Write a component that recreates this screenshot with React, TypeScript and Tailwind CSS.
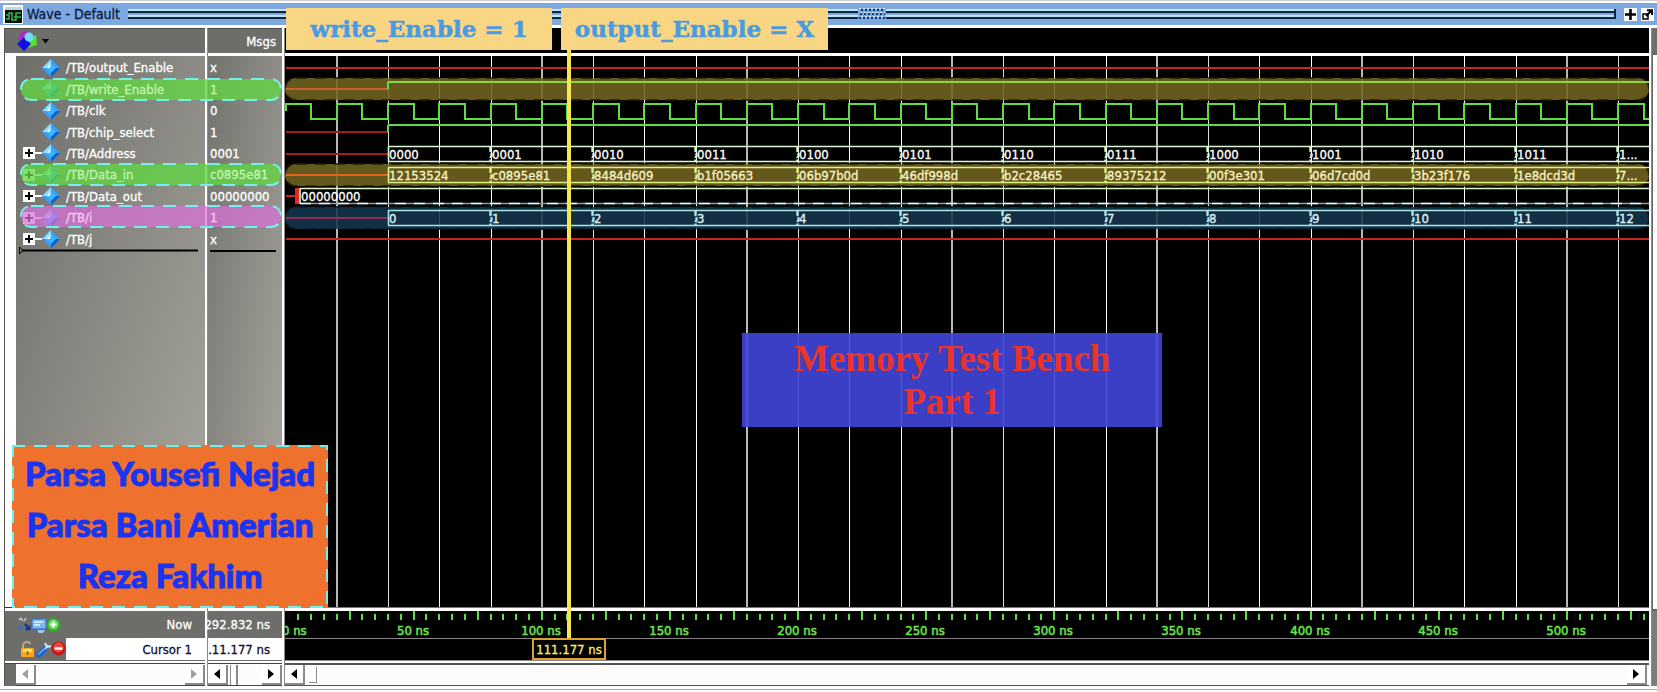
import React from "react";

const NS = 2.5625;
const ROW = 193 / 9;
const TOP = 1;

const GREEN = "relative z-10 text-[#c4f5ae]";
const PINK = "relative z-10 text-[#f8c8f4]";

const signals = [
  { name: "/TB/output_Enable", value: "x", bus: false, tint: "" },
  { name: "/TB/write_Enable", value: "1", bus: false, tint: GREEN },
  { name: "/TB/clk", value: "0", bus: false, tint: "" },
  { name: "/TB/chip_select", value: "1", bus: false, tint: "" },
  { name: "/TB/Address", value: "0001", bus: true, tint: "" },
  { name: "/TB/Data_in", value: "c0895e81", bus: true, tint: GREEN },
  { name: "/TB/Data_out", value: "00000000", bus: true, tint: "" },
  { name: "/TB/i", value: "1", bus: true, tint: PINK },
  { name: "/TB/j", value: "x", bus: true, tint: "" },
];

const addresses = ["0000", "0001", "0010", "0011", "0100", "0101", "0110", "0111", "1000", "1001", "1010", "1011", "1..."];
const dataIn = ["12153524", "c0895e81", "8484d609", "b1f05663", "06b97b0d", "46df998d", "b2c28465", "89375212", "00f3e301", "06d7cd0d", "3b23f176", "1e8dcd3d", "7..."];
const indexes = addresses.map((_, i) => String(i));

const rowY = (i: number) => Math.round(TOP + ROW * (i + 0.5));
const timeX = (ns: number) => Math.round(ns * NS + 0.5);
const range = (n: number) => Array.from({ length: n }, (_, i) => i);

function Diamond() {
  return (
    <svg width="18" height="18" viewBox="0 0 18 18" className="shrink-0">
      <path d="M9 0L18 9L9 18L0 9Z" fill="#1f86e8" />
      <path d="M9 0L0 9L5 9L9 5Z" fill="#8fdcff" />
      <path d="M9 0L18 9L13 9L9 5Z" fill="#3aa0f4" />
      <path d="M0 9L9 18L9 13L5 9Z" fill="#3f9af0" />
      <path d="M18 9L9 18L9 13L13 9Z" fill="#0b5fc8" />
      <path d="M9 4L14 9L9 14L4 9Z" fill="#38b6ff" />
      <path d="M9 4L4 9L8 9Z" fill="#e6fbff" />
    </svg>
  );
}

function Arrow({ dir, faint }: { dir: "left" | "right"; faint?: boolean }) {
  return (
    <button
      aria-label={dir === "left" ? "Scroll left" : "Scroll right"}
      className="flex h-5 w-5 shrink-0 items-center justify-center border-r-2 border-b-2 border-[#8a8a8a] bg-white"
    >
      <svg width="6" height="10" viewBox="0 0 6 10">
        <path d={dir === "left" ? "M6 0V10L0 5Z" : "M0 0V10L6 5Z"} fill={faint ? "#a0a0a0" : "#000"} />
      </svg>
    </button>
  );
}

function Bus({ row, values, color, text }: { row: number; values: string[]; color: string; text: string }) {
  const y = rowY(row);
  const start = timeX(40);
  return (
    <g>
      <g stroke={color} strokeWidth="1.6">
        <line x1={start} x2="100%" y1={y - 7.5} y2={y - 7.5} />
        <line x1={start} x2="100%" y1={y + 7.5} y2={y + 7.5} />
        <line x1={start + 0.5} x2={start + 0.5} y1={y - 7.5} y2={y + 7.5} />
        {values.slice(1).map((v, i) => {
          const x = timeX(80 + i * 40);
          return <path key={v} d={`M${x - 0.5} ${y - 7}v4l1 2v3l-1 2v4`} strokeWidth="2.4" strokeDasharray="5 1.5" fill="none" />;
        })}
      </g>
      {values.map((v, i) => (
        <text key={v} x={timeX(40 + i * 40) + 1} y={y + 5} fill={text} stroke={text} strokeWidth="0.3">{v}</text>
      ))}
    </g>
  );
}

function Band({ row, fill, edge }: { row: number; fill: string; edge: string }) {
  const y = rowY(row) - 11;
  return (
    <g>
      <rect x="0" y={y} width="100%" height="22" rx="11" fill={fill} />
      <rect x="0" y={y} width="100%" height="22" rx="11" fill="none" stroke={edge} strokeWidth="2" strokeDasharray="11 8" />
    </g>
  );
}

function Waves() {
  const clock = range(80).map((i) => `V${rowY(2) - 7}H${timeX(i * 20 + 10)}V${rowY(2) + 8}H${timeX(i * 20 + 20)}`).join("");
  const start = timeX(40);
  return (
    <svg width="100%" height="100%" className="absolute inset-0 text-[13px]">
      {range(80).map((i) => {
        const x = timeX((i + 1) * 20);
        return i % 4 === 0 ? (
          <line key={i} x1={x} x2={x} y1="0" y2="100%" stroke="#b8b8b6" strokeWidth="2" />
        ) : (
          <line key={i} x1={x + 0.5} x2={x + 0.5} y1="0" y2="100%" stroke={i % 4 === 1 ? "#dededc" : "#ffffff"} strokeWidth="1" />
        );
      })}
      <Band row={1} fill="rgba(114,100,32,0.88)" edge="rgba(34,28,4,0.75)" />
      <Band row={5} fill="rgba(114,100,32,0.88)" edge="rgba(34,28,4,0.75)" />
      <Band row={7} fill="rgba(20,54,78,0.88)" edge="rgba(8,26,38,0.85)" />
      <g strokeWidth="2" stroke="#c8271f">
        <line x1="1" x2="100%" y1={rowY(0)} y2={rowY(0)} />
        <line x1="1" x2={start} y1={rowY(1)} y2={rowY(1)} stroke="#c8622a" />
        <line x1="1" x2={start} y1={rowY(3)} y2={rowY(3)} stroke="#a81c18" />
        <line x1="1" x2={start} y1={rowY(4)} y2={rowY(4)} stroke="#a81c18" />
        <line x1="1" x2={start} y1={rowY(5)} y2={rowY(5)} stroke="#e0661f" />
        <line x1="1" x2="12" y1={rowY(6)} y2={rowY(6)} />
        <line x1="1" x2={start} y1={rowY(7)} y2={rowY(7)} stroke="#8a3150" />
        <line x1="1" x2="100%" y1={rowY(8)} y2={rowY(8)} />
      </g>
      <g fill="none" stroke="#5fdc46" strokeWidth="2">
        <line x1={start} x2={start} y1={rowY(1) - 7} y2={rowY(1)} />
        <line x1={start} x2="100%" y1={rowY(1) - 7} y2={rowY(1) - 7} stroke="#86d843" />
        <path d={`M1 ${rowY(2)}${clock}`} />
        <line x1={start} x2={start} y1={rowY(3) - 7} y2={rowY(3)} />
        <line x1={start} x2="100%" y1={rowY(3) - 7} y2={rowY(3) - 7} />
      </g>
      <Bus row={4} values={addresses} color="#d9f8d0" text="#ffffff" />
      <Bus row={5} values={dataIn} color="#dcf08a" text="#fbf3c4" />
      <rect x="10" y={rowY(6) - 8} width="5" height="16" fill="#e8281c" />
      <g stroke="#d9f8d0" strokeWidth="1.6">
        <line x1="15" x2="100%" y1={rowY(6) - 7.5} y2={rowY(6) - 7.5} />
        <line x1="15" x2="15" y1={rowY(6) - 7.5} y2={rowY(6) + 7.5} />
        <line x1="15" x2="100%" y1={rowY(6) + 7.5} y2={rowY(6) + 7.5} stroke="#8f9f9f" />
        <line x1="15" x2="100%" y1={rowY(6) + 7.5} y2={rowY(6) + 7.5} stroke="#d6fbff" strokeDasharray="11 8" />
      </g>
      <text x="16" y={rowY(6) + 5} fill="#fff" stroke="#fff" strokeWidth="0.3">00000000</text>
      <Bus row={7} values={indexes} color="#a9e6dc" text="#e2f3f8" />
    </svg>
  );
}

function Timeline() {
  return (
    <svg width="100%" height="27" className="block bg-black text-[13px]">
      {range(300).map((i) => (
        <line key={i} x1={timeX((i + 1) * 5)} x2={timeX((i + 1) * 5)} y1={(i + 1) % 5 === 0 ? 0 : 3} y2="9" stroke="#5fdc46" strokeWidth="2" />
      ))}
      <g fill="#6be34f" stroke="#6be34f" strokeWidth="0.5">
        <text x="-3" y="24">0 ns</text>
        {range(10).map((i) => (
          <text key={i} x={timeX((i + 1) * 50) - 1} y="24" textAnchor="middle">{`${(i + 1) * 50} ns`}</text>
        ))}
      </g>
    </svg>
  );
}

function HeaderIcon() {
  return (
    <svg width="22" height="22" viewBox="0 0 22 22">
      <path d="M6 2L12 0L8 8L1 10Z" fill="#b026c9" />
      <path d="M13 9L20 5L21 15L12 18Z" fill="#58e02e" />
      <path d="M8 7L15 14L8 21L1 14Z" fill="#1010e6" />
      <circle cx="13" cy="7" r="4.5" fill="#6fdcff" />
    </svg>
  );
}

function NowIcons() {
  return (
    <svg width="46" height="18" viewBox="0 0 46 18">
      <path d="M2 4l2-2 2 3M7 5l2-3" stroke="#d6dde6" strokeWidth="1.2" fill="none" />
      <circle cx="3.500" cy="12" r="2.300" fill="#3f6fa8" />
      <path d="M8 8l5 6M9 14l4-4" stroke="#0c3c86" strokeWidth="2.500" />
      <rect x="15" y="3" width="14" height="10" rx="1" fill="#7db8f2" stroke="#2c6fd0" />
      <path d="M17 6h9M17 9h6" stroke="#eaf5ff" strokeWidth="1.500" />
      <path d="M20 14h8l-2 3h-4z" fill="#9ccaf5" />
      <circle cx="36.500" cy="9" r="7" fill="#2fae2a" />
      <circle cx="36.500" cy="8.500" r="5" fill="#6fd75c" />
      <path d="M36.500 5.500v6M33.500 8.500h6" stroke="#fff" strokeWidth="2.200" />
    </svg>
  );
}

function CursorIcons() {
  return (
    <svg width="47" height="18" viewBox="0 0 47 18">
      <path d="M4 9V5.500a4 4 0 0 1 7.500-1.500" stroke="#b9a77c" strokeWidth="2" fill="none" />
      <rect x="2" y="8" width="13" height="9" rx="1" fill="#f6a623" />
      <rect x="4" y="9" width="9" height="3" fill="#ffe27a" />
      <path d="M8.500 11v4" stroke="#8b5a00" strokeWidth="1.500" />
      <path d="M20 15L26 9" stroke="#1c62d6" strokeWidth="5" strokeLinecap="round" />
      <path d="M20 14L25 9" stroke="#74b5ff" strokeWidth="1.500" strokeLinecap="round" />
      <path d="M26 9L29 5M26 3l2 4 4-1" stroke="#cfe2f5" strokeWidth="2" fill="none" />
      <circle cx="39.500" cy="8.500" r="7" fill="#c81414" />
      <circle cx="39.500" cy="7.500" r="5" fill="#e84a42" />
      <path d="M35.500 8.500h8" stroke="#fff" strokeWidth="2.400" />
    </svg>
  );
}

function Pill({ tone, place }: { tone: string; place: string }) {
  return (
    <svg height="23" className={`absolute left-[15px] w-[262px] ${place}`}>
      <rect x="1" y="1" width="260" height="21" rx="10" fill={tone} />
      <rect x="1" y="1" width="260" height="21" rx="10" fill="none" stroke="#74f0ea" strokeWidth="2" strokeDasharray="13 9" />
    </svg>
  );
}

function Divider() {
  return <div className="w-[3px] shrink-0 border-r border-[#8d8d88] bg-white" />;
}

export default function App() {
  return (
    <div className="relative flex min-h-screen flex-col overflow-hidden border-t border-[#cfcfcf] bg-white pt-[2px] font-['DejaVu_Sans_Condensed','Noto_Sans',sans-serif] text-[13px] leading-none text-white">
      <header className="flex h-[22px] items-center gap-2 bg-[#7da9e0] px-[3px]">
        <div className="flex items-center gap-1">
          <svg width="20" height="19" viewBox="0 0 20 19">
            <rect width="20" height="19" fill="#fff" />
            <rect x="2" y="2" width="17" height="16" fill="#0a0f0a" />
            <rect x="2" y="2" width="17" height="3" fill="#c9d3dd" />
            <path d="M3 14h3V8h3v7h4V8h5M3 10h2M11 12h7" stroke="#2fbf4c" strokeWidth="1.500" fill="none" />
          </svg>
          <h1 className="text-sm leading-none text-[#0c1a44] [-webkit-text-stroke:0.3px]">Wave - Default</h1>
        </div>
        <div className="relative flex flex-1 flex-col gap-[2px] border-r-2 border-[#0e2242]">
          <div className="h-[4px] border-b-2 border-[#0e2242] bg-[#bfe6fb]" />
          <div className="h-[4px] border-b-2 border-[#0e2242] bg-[#bfe6fb]" />
          <svg width="28" height="14" viewBox="0 0 28 14" className="absolute -top-[2px] left-1/2 -ml-[13px]">
            <rect width="28" height="14" fill="#7da9e0" />
            {range(3).map((r) => (
              <path key={r} d={`M${3 - r} ${3 + r * 4}H27`} stroke="#123a78" strokeWidth="2" strokeDasharray="2 2" />
            ))}
            {range(3).map((r) => (
              <path key={r} d={`M${1 + r} ${1.5 + r * 4}H27`} stroke="#d8f0ff" strokeWidth="1" strokeDasharray="2 2" />
            ))}
          </svg>
        </div>
        <div className="flex gap-1">
          <button aria-label="Add" className="flex h-[13px] w-[13px] items-center justify-center bg-white">
            <svg width="11" height="11" viewBox="0 0 11 11"><path d="M5.500 0V11M0 5.500H11" stroke="#000" strokeWidth="2.600" /></svg>
          </button>
          <button aria-label="Undock" className="flex h-[13px] w-[13px] items-center justify-center bg-white">
            <svg width="11" height="11" viewBox="0 0 11 11">
              <rect x="1" y="5" width="5" height="5" fill="none" stroke="#000" strokeWidth="1.500" />
              <path d="M4 7L9 2M5 1.200H10V6" stroke="#000" strokeWidth="2" fill="none" />
            </svg>
          </button>
        </div>
      </header>

      <main className="mt-[3px] flex flex-1">
        <div className="w-[5px] shrink-0 border-r border-[#555] bg-white" />
        <div className="relative flex shrink-0 [-webkit-text-stroke:0.3px]">
          <section className="flex w-[200px] flex-col bg-[#6d6d69]">
            <div className="flex h-[25px] items-center gap-1 border-t border-[#4a4a48] pl-[11px]">
              <HeaderIcon />
              <svg width="7" height="5" viewBox="0 0 7 5"><path d="M0 0H7L3.500 4.500Z" fill="#000" /></svg>
            </div>
            <div className="h-[3px] bg-white" />
            <div className="flex flex-1 border-b border-[#333]">
              <div className="w-[11px] shrink-0 bg-white" />
              <div className="flex-1 bg-linear-to-br from-[#6f6f6a] to-[#aaa9a1] pt-px">
                <ul className="grid h-[193px] grid-rows-9">
                  {signals.map((s) => (
                    <li key={s.name} className="flex items-center pl-[7px]">
                      {s.bus ? (
                        <>
                          <button aria-label={`Expand ${s.name}`} className="flex h-3 w-3 items-center justify-center bg-white">
                            <svg width="8" height="8" viewBox="0 0 8 8"><path d="M4 0V8M0 4H8" stroke="#000" strokeWidth="2" /></svg>
                          </button>
                          <span className="h-[2px] w-[7px] bg-white" />
                        </>
                      ) : (
                        <span className="w-[19px]" />
                      )}
                      <Diamond />
                      <span className={`pl-[6px] ${s.tint}`}>{s.name}</span>
                    </li>
                  ))}
                </ul>
                <svg width="100%" height="8" className="-mt-1 block">
                  <path d="M3.500 1V8L7 4.500Z" stroke="#000" fill="none" />
                  <path d="M6 4.500H182" stroke="#000" strokeWidth="2" />
                </svg>
              </div>
            </div>
            <div className="h-[3px] bg-white" />
            <div className="flex h-[27px] items-center justify-between pr-[13px] pl-3">
              <NowIcons />
              <span>Now</span>
            </div>
            <div className="flex h-[22px] items-center justify-between pl-[14px]">
              <CursorIcons />
              <div className="flex h-[22px] flex-1 items-center justify-end bg-white pr-[13px] text-[#101030]">Cursor 1</div>
            </div>
            <div className="mt-px h-[2px] bg-white" />
            <div className="flex h-[23px] border-t border-[#444] pl-[11px]">
              <div className="flex flex-1 items-center justify-between border-b border-[#444] bg-[#fcfcfc]">
                <Arrow dir="left" faint />
                <Arrow dir="right" faint />
              </div>
            </div>
          </section>
          <Divider />
          <section className="flex w-[74px] flex-col bg-[#6d6d69]">
            <div className="flex h-[25px] items-center justify-end border-t border-[#4a4a48] pr-[6px]">Msgs</div>
            <div className="h-[3px] bg-white" />
            <div className="flex-1 border-b border-[#333] bg-linear-to-br from-[#73736e] to-[#aaa9a1] pt-px">
              <ul className="grid h-[193px] grid-rows-9">
                {signals.map((s) => (
                  <li key={s.name} className={`flex items-center pl-[2px] ${s.tint}`}>{s.value}</li>
                ))}
              </ul>
              <div className="mr-[6px] ml-[2px] h-[2px] bg-black" />
            </div>
            <div className="h-[3px] bg-white" />
            <div className="flex h-[27px] items-center justify-end pr-3 whitespace-nowrap">292.832 ns</div>
            <div className="flex h-[22px] items-center justify-end bg-white pr-3 whitespace-nowrap text-[#101030]">.11.177 ns</div>
            <div className="mt-px h-[2px] bg-white" />
            <div className="flex h-[23px] items-center border-t border-b border-[#444] bg-[#fcfcfc]">
              <Arrow dir="left" />
              <div className="ml-[2px] h-5 w-2 border-r-2 border-l border-[#8a8a8a] bg-white" />
              <div className="flex-1" />
              <Arrow dir="right" />
            </div>
          </section>
          <Pill tone="rgba(98,214,66,0.78)" place="top-[50px]" />
          <Pill tone="rgba(98,214,66,0.78)" place="top-[135px]" />
          <Pill tone="rgba(216,112,216,0.72)" place="top-[177px]" />
        </div>
        <Divider />

        <section className="relative flex min-w-0 flex-1 flex-col bg-black">
          <div className="h-[25px]" />
          <div className="h-[3px] bg-white" />
          <div className="relative flex-1 overflow-hidden border-b border-[#777]">
            <Waves />
          </div>
          <div className="h-[3px] bg-white" />
          <Timeline />
          <div className="h-[23px] border-t border-b border-[#8a8488]" />
          <div className="h-[2px] bg-white" />
          <div className="flex h-[23px] items-center border-t-2 border-b border-[#555] bg-[#fcfcfc] pr-[2px]">
            <Arrow dir="left" />
            <div className="ml-1 h-4 w-2 border-r border-b border-[#8a8a8a]" />
            <div className="flex-1" />
            <Arrow dir="right" />
          </div>
          <div className="absolute top-[20px] bottom-[48px] left-[282px] w-1 bg-[#f8e650]" />
          <div className="absolute bottom-[26px] left-[247px] flex h-[22px] w-[74px] items-center justify-center border-2 border-[#d9a32c] bg-black whitespace-nowrap text-[#ffe873] [-webkit-text-stroke:0.3px]">
            111.177 ns
          </div>
          <div className="absolute top-[305px] left-[457px] w-[420px] bg-[rgba(64,70,218,0.9)] py-1 text-center font-['Liberation_Serif',serif] text-[37px] leading-[43px] font-bold text-[#ea3428]">
            <p>Memory Test Bench</p>
            <p>Part 1</p>
          </div>
        </section>
        <Divider />
        <aside className="flex w-[5px] shrink-0 flex-col bg-white">
          <div className="h-[25px] bg-[#6d6d69]" />
          <div className="flex-1 border-t-2 border-b-2 border-l border-[#666]" />
          <div className="h-[75px] bg-[#7c7c78]" />
        </aside>
      </main>
      <footer className="mt-[3px] h-[3px] border-t border-[#aaa] bg-white" />

      <div className="absolute top-[7px] left-[286px] flex gap-[9px] font-['DejaVu_Serif',serif] text-[23px] font-bold text-[#4a9be0] [-webkit-text-stroke:0.5px]">
        <p className="flex h-[42px] w-[266px] items-center justify-center bg-[#f9d684] pb-[2px] whitespace-nowrap">write_Enable = 1</p>
        <p className="flex h-[42px] w-[267px] items-center justify-center bg-[#f9d684] pb-[2px] whitespace-nowrap">output_Enable = X</p>
      </div>

      <div className="absolute bottom-[84px] left-3 w-[316px] bg-[#ee722e] pt-[3px] pb-[7px] text-center font-['Lato',sans-serif] text-[33px] leading-[51px] font-black whitespace-nowrap text-[#1a34f0] [-webkit-text-stroke:1px]">
        <svg width="100%" height="100%" className="absolute inset-0">
          <rect width="100%" height="100%" fill="none" stroke="#6ff0ec" strokeWidth="4" strokeDasharray="13 9" />
        </svg>
        <p>Parsa Yousefi Nejad</p>
        <p>Parsa Bani Amerian</p>
        <p>Reza Fakhim</p>
      </div>
    </div>
  );
}
